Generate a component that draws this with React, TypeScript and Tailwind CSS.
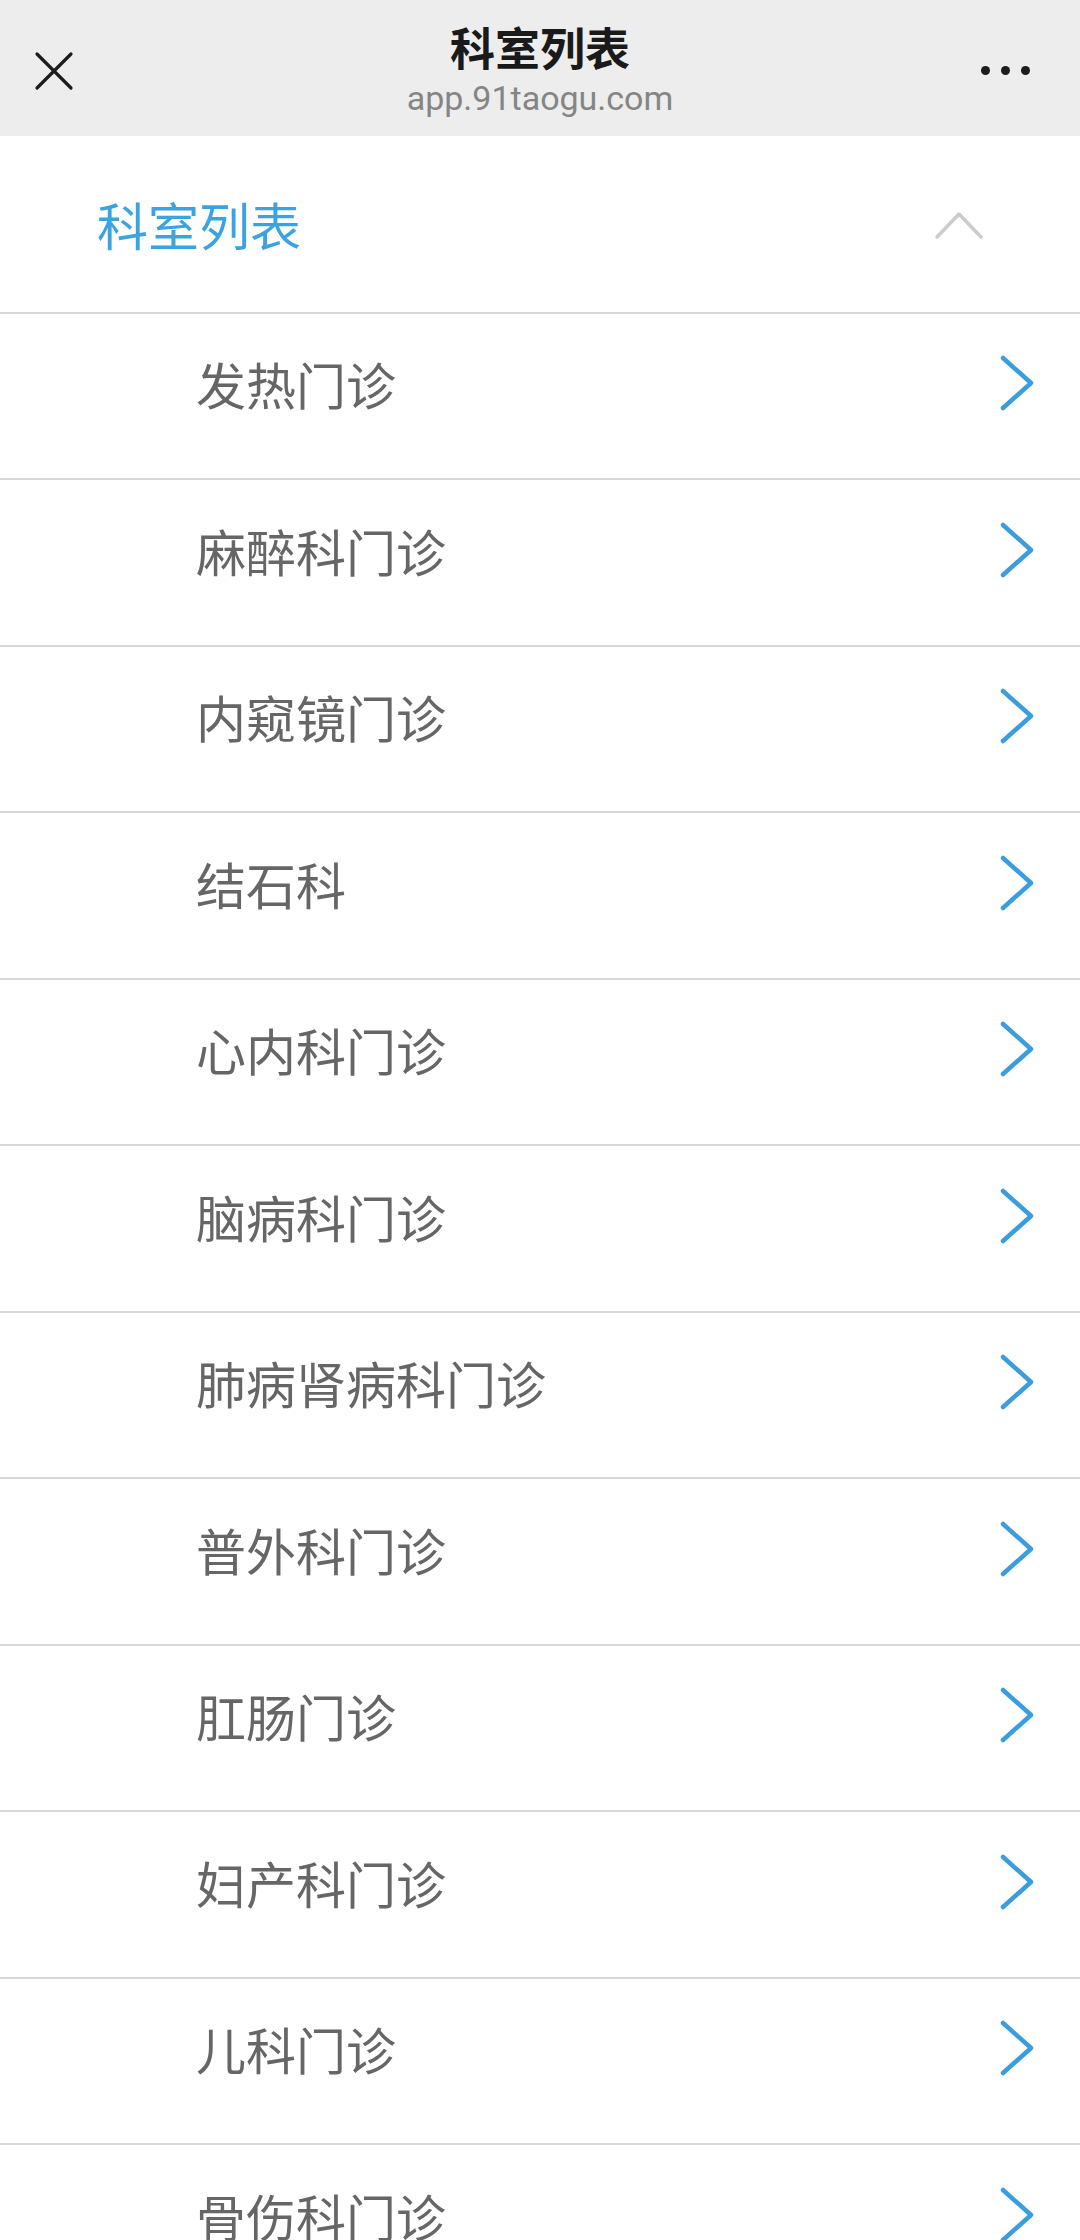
import React from "react";

const DEPTS = [
  "发热门诊",
  "麻醉科门诊",
  "内窥镜门诊",
  "结石科",
  "心内科门诊",
  "脑病科门诊",
  "肺病肾病科门诊",
  "普外科门诊",
  "肛肠门诊",
  "妇产科门诊",
  "儿科门诊",
  "骨伤科门诊",
];

const CJK = "font-['Noto_Sans_CJK_SC','Noto_Sans',sans-serif]";

function ChevronRight() {
  return (
    <svg width="36" height="56" viewBox="0 0 36 56" fill="none">
      <polyline
        points="4,3 32,28 4,53"
        stroke="#3a9de0"
        strokeWidth="4.5"
        strokeLinecap="round"
        strokeLinejoin="round"
      />
    </svg>
  );
}

function ChevronUp() {
  return (
    <svg width="50" height="32" viewBox="0 0 50 32" fill="none">
      <polyline
        points="3,29 25,6 47,29"
        stroke="#cccccc"
        strokeWidth="3.5"
        strokeLinecap="round"
        strokeLinejoin="round"
      />
    </svg>
  );
}

function CloseIcon() {
  return (
    <svg width="40" height="40" viewBox="0 0 40 40" fill="none">
      <path d="M3 3 L37 37 M37 3 L3 37" stroke="#1c1c1c" strokeWidth="3.2" strokeLinecap="round" />
    </svg>
  );
}

export default function App() {
  return (
    <div className={`w-[1080px] min-h-[2240px] bg-white ${CJK}`}>
      {/* Top bar */}
      <div className="relative h-[136px] bg-[#ededed] flex flex-col items-center">
        <div className="absolute left-[34px] top-[51px]">
          <CloseIcon />
        </div>
        <div className="mt-[18px] text-[45px] leading-[58px] font-bold text-[#1a1a1a]">科室列表</div>
        <div className="mt-[2px] text-[34px] leading-[40px] text-[#858585] font-['Roboto','Liberation_Sans',sans-serif]">
          app.91taogu.com
        </div>
        <div className="absolute right-[50px] top-[66px] flex gap-[11px]">
          <span className="w-[9px] h-[9px] rounded-full bg-[#1c1c1c]" />
          <span className="w-[9px] h-[9px] rounded-full bg-[#1c1c1c]" />
          <span className="w-[9px] h-[9px] rounded-full bg-[#1c1c1c]" />
        </div>
      </div>

      {/* Section header */}
      <div className="h-[178px] border-b-2 border-[#d8d8d8] flex items-center justify-between pl-[97px] pr-[96px]">
        <span className="text-[51px] text-[#3ba3e0] leading-none">科室列表</span>
        <ChevronUp />
      </div>

      {/* Rows */}
      {DEPTS.map((name, i) => (
        <div
          key={name}
          className={`${i % 2 ? "h-[167px]" : "h-[166px]"} border-b-2 border-[#d8d8d8] flex items-center justify-between pl-[196px] pr-[45px] pb-[26px]`}
        >
          <span className="text-[50px] text-[#666666] leading-none">{name}</span>
          <ChevronRight />
        </div>
      ))}
    </div>
  );
}
